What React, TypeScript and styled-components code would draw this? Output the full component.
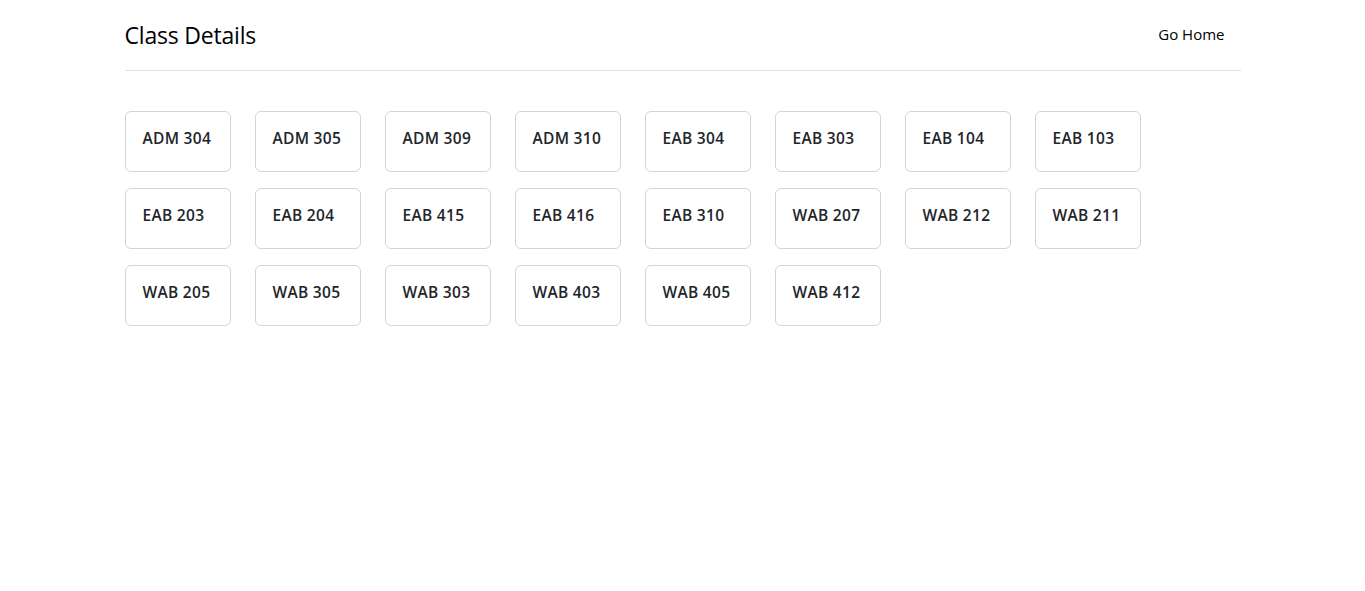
import React from "react";
import styled, { createGlobalStyle } from "styled-components";

const Global = createGlobalStyle`
  * { box-sizing: border-box; }
  body {
    margin: 0;
    background: #fff;
    font-family: "Open Sans", "Noto Sans", sans-serif;
    color: #212529;
  }
`;

const Container = styled.div`
  width: 1116px;
  margin: 0 auto;
`;

const Header = styled.header`
  display: flex;
  align-items: center;
  justify-content: space-between;
  height: 71px;
  padding-bottom: 1px;
  border-bottom: 1px solid #dee2e6;
`;

const Title = styled.h1`
  margin: 0;
  font-size: 23px;
  font-weight: 400;
  color: #000;
  letter-spacing: -0.2px;
`;

const NavLink = styled.a`
  font-size: 15px;
  color: #000;
  text-decoration: none;
  padding: 0 16px 1px 0;
  cursor: pointer;
`;

const Grid = styled.div`
  display: flex;
  flex-wrap: wrap;
  gap: 16px 24px;
  width: 1040px;
  padding-top: 40px;
`;

const Card = styled.div`
  width: 106px;
  height: 61px;
  border: 1px solid #d4d4d4;
  border-radius: 6px;
  padding: 16px 16px 0 17px;
  background: #fff;
`;

const CardTitle = styled.div`
  font-size: 15.5px;
  font-weight: 600;
  line-height: 21px;
  color: #212529;
  white-space: nowrap;
  letter-spacing: 0.3px;
`;

const rooms = [
  "ADM 304", "ADM 305", "ADM 309", "ADM 310", "EAB 304", "EAB 303", "EAB 104", "EAB 103",
  "EAB 203", "EAB 204", "EAB 415", "EAB 416", "EAB 310", "WAB 207", "WAB 212", "WAB 211",
  "WAB 205", "WAB 305", "WAB 303", "WAB 403", "WAB 405", "WAB 412",
];

export default function App() {
  return (
    <>
      <Global />
      <Container>
        <Header>
          <Title>Class Details</Title>
          <NavLink>Go Home</NavLink>
        </Header>
        <Grid>
          {rooms.map((r) => (
            <Card key={r}>
              <CardTitle>{r}</CardTitle>
            </Card>
          ))}
        </Grid>
      </Container>
    </>
  );
}
